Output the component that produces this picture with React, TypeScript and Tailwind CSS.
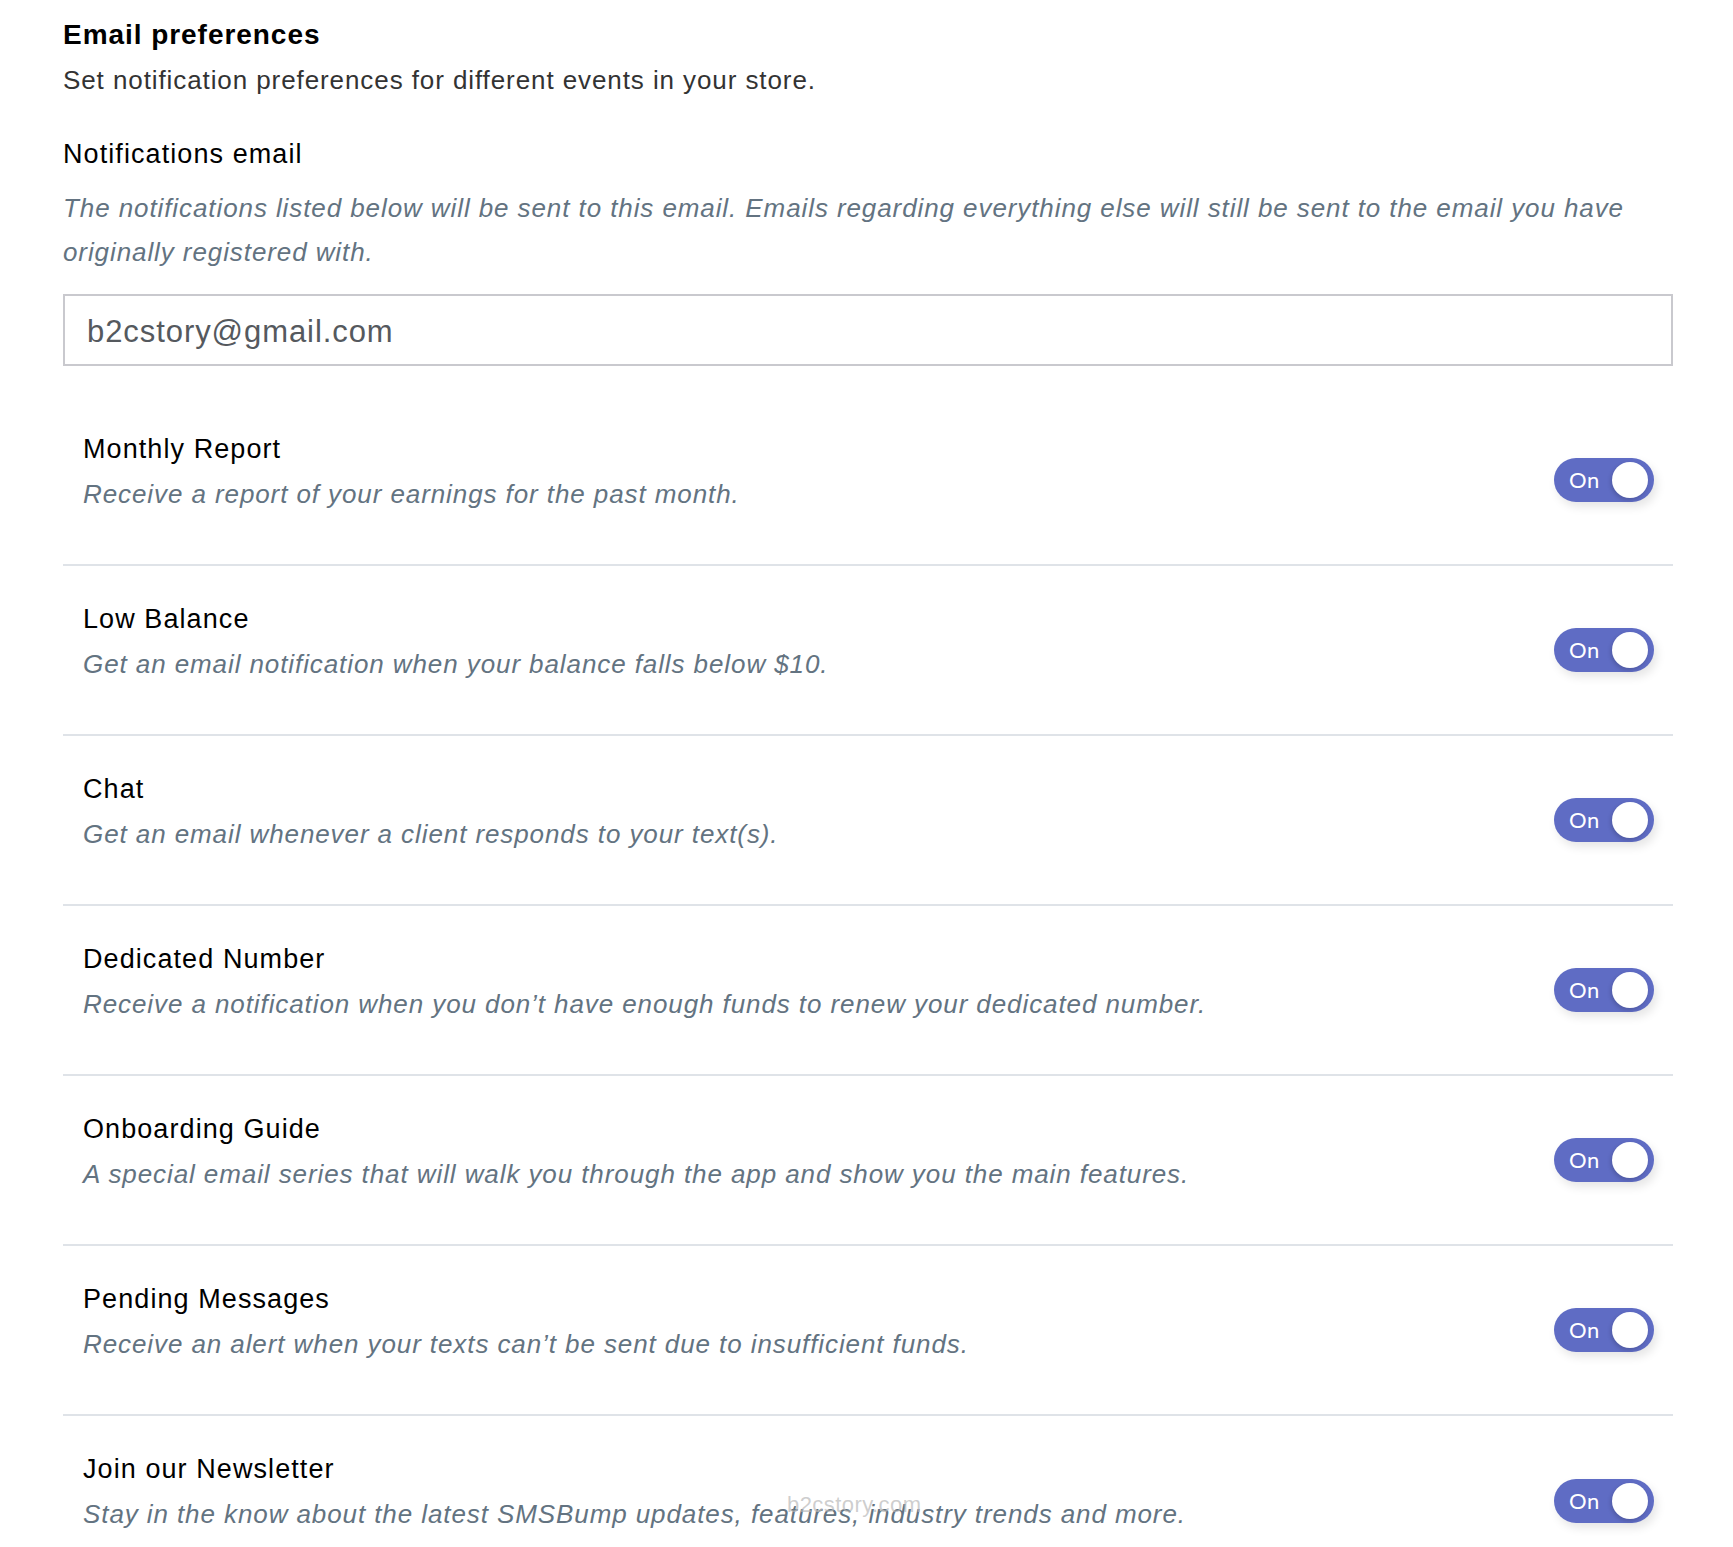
import React from "react";

const rows = [
  { title: "Monthly Report", desc: "Receive a report of your earnings for the past month." },
  { title: "Low Balance", desc: "Get an email notification when your balance falls below $10." },
  { title: "Chat", desc: "Get an email whenever a client responds to your text(s)." },
  { title: "Dedicated Number", desc: "Receive a notification when you don\u2019t have enough funds to renew your dedicated number." },
  { title: "Onboarding Guide", desc: "A special email series that will walk you through the app and show you the main features." },
  { title: "Pending Messages", desc: "Receive an alert when your texts can\u2019t be sent due to insufficient funds." },
  { title: "Join our Newsletter", desc: "Stay in the know about the latest SMSBump updates, features, industry trends and more." },
];

function Toggle() {
  return (
    <div className="relative flex h-[44px] w-[100px] shrink-0 items-center rounded-full bg-[#5f6cc4] shadow-[3px_5px_10px_rgba(0,0,0,0.10)]">
      <span className="pl-[15px] font-['Lato','Open_Sans',sans-serif] text-[22px] leading-none tracking-[0.6px] text-white">On</span>
      <span className="absolute right-[6px] top-[4px] h-[36px] w-[36px] rounded-full bg-white shadow-[-1px_2px_4px_rgba(0,0,0,0.18)]" />
    </div>
  );
}

export default function App() {
  return (
    <div className="relative min-h-screen bg-white font-['Liberation_Sans',Arial,sans-serif]">
      <div className="pl-[63px] pr-[60px] pt-[18px]">
        <h1 className="text-[28px] font-bold leading-[34px] tracking-[0.034em] text-black">Email preferences</h1>
        <p className="mt-[10px] text-[26px] leading-[36px] tracking-[0.035em] text-[#333333]">
          Set notification preferences for different events in your store.
        </p>
        <h2 className="mt-[38px] text-[27px] leading-[36px] tracking-[0.04em] text-black">Notifications email</h2>
        <p className="mt-[14px] text-[26px] italic leading-[44px] tracking-[0.035em] text-[#637381]">
          The notifications listed below will be sent to this email. Emails regarding everything else will still be sent to the email you have originally registered with.
        </p>
        <div className="mt-[20px] flex h-[72px] items-center border-2 border-[#c9c9ce] pl-[22px] pt-[4px]">
          <span className="text-[31px] tracking-[0.03em] text-[#55595e]">b2cstory@gmail.com</span>
        </div>
        <div className="mt-[30px]">
          {rows.map((r, i) => (
            <div
              key={r.title}
              className={
                i < rows.length - 1
                  ? "flex h-[170px] items-center justify-between border-b-2 border-[#dfe3e8] pl-[20px] pr-[19px]"
                  : "flex h-[170px] items-center justify-between pl-[20px] pr-[19px]"
              }
            >
              <div className="self-start pt-[35px]">
                <div className="text-[27px] leading-[36px] tracking-[0.04em] text-black">{r.title}</div>
                <div className="mt-[7px] text-[26px] italic leading-[40px] tracking-[0.035em] text-[#637381]">{r.desc}</div>
              </div>
              <Toggle />
            </div>
          ))}
        </div>
      </div>
      <div className="pointer-events-none absolute left-[787px] top-[1488px] text-[22px] tracking-[0.02em] text-[#b9b9b9]/70">
        b2cstory.com
      </div>
    </div>
  );
}
